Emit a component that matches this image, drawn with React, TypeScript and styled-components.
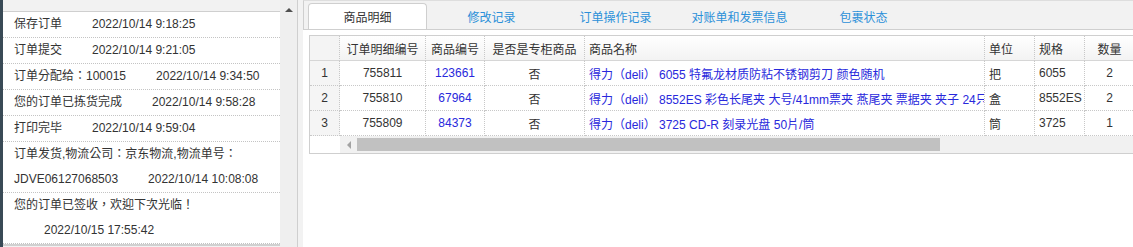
import React from 'react';
import styled, {createGlobalStyle} from 'styled-components';

const GlobalStyle = createGlobalStyle`
  html, body {
    margin: 0;
    padding: 0;
    background: #f2f2f2;
  }
  body {
    font-family: "Liberation Sans", Arial, "Noto Sans CJK TC", "Noto Sans CJK SC", sans-serif;
    font-size: 12px;
    color: #333;
  }
`;

const Page = styled.div`
  display: flex;
  width: 1133px;
  height: 247px;
  overflow: hidden;
`;

const DarkEdge = styled.div`
  flex: none;
  width: 3px;
  background: #394a56;
`;

const LeftPanel = styled.div`
  flex: none;
  width: 277px;
  padding-top: 11px;
  background: #f2f2f2;
`;

const LogList = styled.div`
  background: #fff;
  border-top: 1px solid #cfcfcf;
  border-bottom: 2px solid #d0d0d0;
`;

const LogRow = styled.div`
  padding-left: 11px;
  line-height: 25px;
  white-space: nowrap;
  border-bottom: 1px dotted #c4c4c4;
`;

const LogLine = styled.div<{$indent?: boolean}>`
  padding-left: ${p => (p.$indent ? '30px' : '0')};
`;

const LogTime = styled.span`
  margin-left: 30px;
`;

const ScrollCol = styled.div`
  flex: none;
  width: 17px;
  background: #efefef;
  border-right: 1px solid #cfcfcf;
`;

const UpArrow = styled.div`
  width: 0;
  height: 0;
  margin: 8px auto 0;
  border-left: 4px solid transparent;
  border-right: 4px solid transparent;
  border-bottom: 4px solid #505050;
`;

const Main = styled.div`
  flex: 1;
  min-width: 0;
  margin-left: 5px;
  background: #fff;
  display: flex;
  flex-direction: column;
  overflow: hidden;
`;

const TabStrip = styled.div`
  box-sizing: border-box;
  height: 30px;
  display: flex;
  align-items: flex-end;
  gap: 5px;
  padding-left: 4px;
  background: #f2f2f2;
  border-top: 1px solid #dedede;
  border-left: 1px solid #cfcfcf;
  border-bottom: 1px solid #cfcfcf;
`;

const Tab = styled.div<{$active?: boolean}>`
  box-sizing: border-box;
  flex: none;
  width: 119px;
  height: 26px;
  display: flex;
  align-items: center;
  justify-content: center;
  border: 1px solid ${p => (p.$active ? '#cfcfcf' : 'transparent')};
  border-bottom: none;
  border-radius: 4px 4px 0 0;
  background: ${p => (p.$active ? '#fff' : 'transparent')};
  color: ${p => (p.$active ? '#333' : '#2b90d9')};
`;

const Content = styled.div`
  padding: 5px 0 0 6px;
`;

const Grid = styled.div`
  width: 825px;
  border: 1px solid #cfcfcf;
  background: #fff;
`;

const Table = styled.table`
  width: 825px;
  table-layout: fixed;
  border-collapse: separate;
  border-spacing: 0;
`;

const Th = styled.th<{$align?: string; $gutter?: boolean}>`
  height: 24px;
  padding: 0 4px;
  font-weight: normal;
  text-align: ${p => p.$align || 'center'};
  white-space: nowrap;
  overflow: hidden;
  background: ${p => (p.$gutter ? '#f4f4f4' : 'linear-gradient(#ffffff, #f3f3f3)')};
  border-right: 1px dotted #c8c8c8;
  border-bottom: 1px solid #d6d6d6;
`;

const Td = styled.td<{$align?: string; $link?: boolean; $gutter?: boolean}>`
  height: 24px;
  padding: 0 4px;
  text-align: ${p => p.$align || 'center'};
  white-space: nowrap;
  overflow: hidden;
  color: ${p => (p.$link ? '#2828dc' : '#333')};
  background: ${p => (p.$gutter ? '#f5f5f5' : '#fff')};
  border-right: 1px dotted #c8c8c8;
  border-bottom: 1px dotted #c8c8c8;
`;

const HScroll = styled.div`
  display: flex;
  height: 17px;
`;

const HScrollSpacer = styled.div`
  flex: none;
  width: 30px;
`;

const HScrollTrack = styled.div`
  flex: 1;
  display: flex;
  align-items: center;
  background: #f1f1f1;
`;

const LeftButton = styled.div`
  flex: none;
  width: 17px;
  display: flex;
  justify-content: center;
`;

const LeftArrow = styled.div`
  width: 0;
  height: 0;
  border-top: 4px solid transparent;
  border-bottom: 4px solid transparent;
  border-right: 4px solid #a3a3a3;
`;

const Thumb = styled.div`
  flex: none;
  width: 583px;
  height: 13px;
  background: #c1c1c1;
`;

const logs = [
  {lines: [{label: '保存订单', time: '2022/10/14 9:18:25'}]},
  {lines: [{label: '订单提交', time: '2022/10/14 9:21:05'}]},
  {lines: [{label: '订单分配给：100015', time: '2022/10/14 9:34:50'}]},
  {lines: [{label: '您的订单已拣货完成', time: '2022/10/14 9:58:28'}]},
  {lines: [{label: '打印完毕', time: '2022/10/14 9:59:04'}]},
  {
    lines: [
      {label: '订单发货,物流公司：京东物流,物流单号：'},
      {label: 'JDVE06127068503', time: '2022/10/14 10:08:08'}
    ]
  },
  {
    lines: [
      {label: '您的订单已签收，欢迎下次光临！'},
      {label: '', time: '2022/10/15 17:55:42', indent: true}
    ]
  }
];

const tabs = ['商品明细', '修改记录', '订单操作记录', '对账单和发票信息', '包裹状态'];

const columns = [
  {title: '', width: 30},
  {title: '订单明细编号', width: 86},
  {title: '商品编号', width: 59},
  {title: '是否是专柜商品', width: 100},
  {title: '商品名称', width: 400, align: 'left'},
  {title: '单位', width: 50, align: 'left'},
  {title: '规格', width: 50, align: 'left'},
  {title: '数量', width: 50}
];

const items = [
  {id: '755811', code: '123661', counter: '否', name: '得力（deli） 6055 特氟龙材质防粘不锈钢剪刀 颜色随机', unit: '把', spec: '6055', qty: '2'},
  {id: '755810', code: '67964', counter: '否', name: '得力（deli） 8552ES 彩色长尾夹 大号/41mm票夹 燕尾夹 票据夹 夹子 24只/筒', unit: '盒', spec: '8552ES', qty: '2'},
  {id: '755809', code: '84373', counter: '否', name: '得力（deli） 3725 CD-R 刻录光盘 50片/筒', unit: '筒', spec: '3725', qty: '1'}
];

export default function App() {
  return (
    <>
      <GlobalStyle/>
      <Page>
        <DarkEdge/>
        <LeftPanel>
          <LogList>
            {logs.map((log, i) => (
              <LogRow key={i}>
                {log.lines.map((line, j) => (
                  <LogLine key={j} $indent={(line as any).indent}>
                    {line.label}
                    {line.time ? (
                      (line as any).indent ? line.time : <LogTime>{line.time}</LogTime>
                    ) : null}
                  </LogLine>
                ))}
              </LogRow>
            ))}
          </LogList>
        </LeftPanel>
        <ScrollCol>
          <UpArrow/>
        </ScrollCol>
        <Main>
          <TabStrip>
            {tabs.map((t, i) => (
              <Tab key={t} $active={i === 0}>{t}</Tab>
            ))}
          </TabStrip>
          <Content>
            <Grid>
              <Table>
                <colgroup>
                  {columns.map((c, i) => <col key={i} style={{width: c.width}}/>)}
                </colgroup>
                <thead>
                  <tr>
                    {columns.map((c, i) => (
                      <Th key={i} $align={c.align} $gutter={i === 0}>{c.title}</Th>
                    ))}
                  </tr>
                </thead>
                <tbody>
                  {items.map((row, i) => (
                    <tr key={row.id}>
                      <Td $gutter>{i + 1}</Td>
                      <Td>{row.id}</Td>
                      <Td $link>{row.code}</Td>
                      <Td>{row.counter}</Td>
                      <Td $align="left" $link>{row.name}</Td>
                      <Td $align="left">{row.unit}</Td>
                      <Td $align="left">{row.spec}</Td>
                      <Td>{row.qty}</Td>
                    </tr>
                  ))}
                </tbody>
              </Table>
              <HScroll>
                <HScrollSpacer/>
                <HScrollTrack>
                  <LeftButton>
                    <LeftArrow/>
                  </LeftButton>
                  <Thumb/>
                </HScrollTrack>
              </HScroll>
            </Grid>
          </Content>
        </Main>
      </Page>
    </>
  );
}
